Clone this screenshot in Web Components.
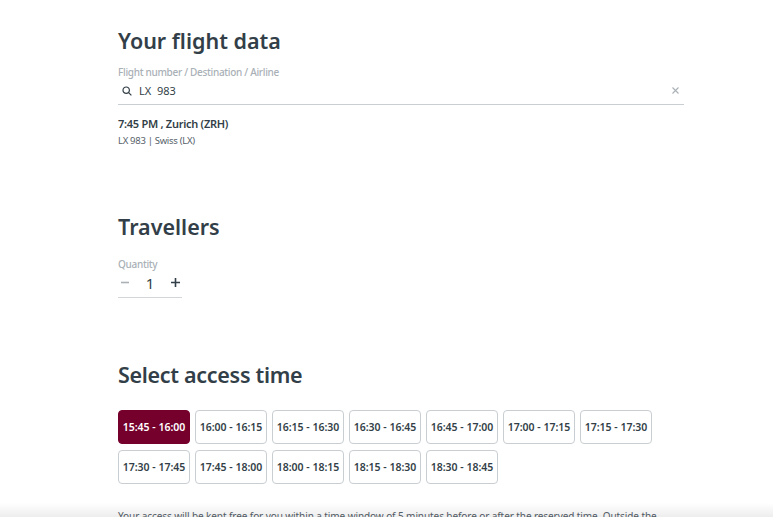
<!DOCTYPE html>
<html lang="en">
<head>
<meta charset="utf-8">
<title>Your flight data</title>
<style>
  html, body { margin: 0; height: 100%; overflow: hidden; background: #fff; }
  body { font-family: "Noto Sans", "Open Sans", sans-serif; color: #333f48; }
</style>
</head>
<body>
<booking-page>
  <form-section heading="Your flight data" style="--section-height: 186px">
    <flight-search label="Flight number / Destination / Airline" value="LX  983"></flight-search>
    <flight-result time="7:45 PM , Zurich (ZRH)" detail="LX 983 | Swiss (LX)"></flight-result>
  </form-section>
  <form-section heading="Travellers" style="--section-height: 148px; --heading-gap: 16px">
    <quantity-stepper label="Quantity" value="1"></quantity-stepper>
  </form-section>
  <form-section heading="Select access time" style="--heading-spacing: -.3px">
    <time-grid>
      <time-slot selected>15:45 - 16:00</time-slot>
      <time-slot>16:00 - 16:15</time-slot>
      <time-slot>16:15 - 16:30</time-slot>
      <time-slot>16:30 - 16:45</time-slot>
      <time-slot>16:45 - 17:00</time-slot>
      <time-slot>17:00 - 17:15</time-slot>
      <time-slot>17:15 - 17:30</time-slot>
      <time-slot>17:30 - 17:45</time-slot>
      <time-slot>17:45 - 18:00</time-slot>
      <time-slot>18:00 - 18:15</time-slot>
      <time-slot>18:15 - 18:30</time-slot>
      <time-slot>18:30 - 18:45</time-slot>
    </time-grid>
    <access-note>Your access will be kept free for you within a time window of 5 minutes before or after the reserved time. Outside the</access-note>
  </form-section>
</booking-page>

<script>
// small helper, every element gets an open shadow root with its own styles
function shadowOf(el, html) {
  const shadow = el.attachShadow({ mode: 'open' });
  shadow.innerHTML = html;
  return shadow;
}

class BookingPage extends HTMLElement {
  constructor() {
    super();
    shadowOf(this, `
      <style>
        :host { display: block; height: 524px; overflow: hidden; position: relative; box-sizing: border-box; padding: 27px 89px 0 118px; }
        /* white footer with a soft shadow above it, the text runs under it */
        .fade { position: absolute; left: 0; right: 0; bottom: 0; height: 21px;
                background: linear-gradient(to bottom, rgba(0,0,0,0) 0, rgba(0,0,0,.07) 14px, #fff 14px); }
      </style>
      <slot></slot>
      <div class="fade"></div>
    `);
  }
}

class FormSection extends HTMLElement {
  constructor() {
    super();
    shadowOf(this, `
      <style>
        :host { display: block; height: var(--section-height, auto); }
        h2 { margin: 0 0 var(--heading-gap, 10px); font-size: 21.5px; line-height: 28px; font-weight: 600; color: #333f48;
             letter-spacing: var(--heading-spacing, 0); }
      </style>
      <h2>${this.getAttribute('heading')}</h2>
      <slot></slot>
    `);
  }
}

class FlightSearch extends HTMLElement {
  constructor() {
    super();
    shadowOf(this, `
      <style>
        :host { display: block; }
        label { display: block; font-size: 10px; line-height: 14px; letter-spacing: -.3px; color: #a9b0b6; font-weight: 500; }
        .field { display: flex; align-items: center; height: 23px; padding: 0 5px 2px 4px; border-bottom: 1px solid #c9ced2; }
        svg { display: block; flex: none; }
        .value { flex: 1; margin-left: 7px; font-size: 11px; color: #333f48; white-space: pre; }
      </style>
      <label>${this.getAttribute('label')}</label>
      <div class="field">
        <svg width="10" height="10" viewBox="0 0 10 10" fill="none" stroke="#333f48" stroke-width="1.2">
          <circle cx="4.2" cy="4.2" r="3.2"/><path d="M6.6 6.6 9.4 9.4"/>
        </svg>
        <span class="value">${this.getAttribute('value')}</span>
        <svg width="7" height="7" viewBox="0 0 7 7" fill="none" stroke="#a9b0b6" stroke-width="1.1">
          <path d="M.5.5l6 6M6.5.5l-6 6"/>
        </svg>
      </div>
    `);
  }
}

class FlightResult extends HTMLElement {
  constructor() {
    super();
    shadowOf(this, `
      <style>
        :host { display: block; margin-top: 12px; }
        b { display: block; font-size: 11px; line-height: 14px; letter-spacing: -.27px; font-weight: 600; color: #333f48; }
        span { display: block; margin-top: 3px; font-size: 9.5px; line-height: 13px; letter-spacing: -.3px; color: #56616a; }
      </style>
      <b>${this.getAttribute('time')}</b>
      <span>${this.getAttribute('detail')}</span>
    `);
  }
}

class QuantityStepper extends HTMLElement {
  constructor() {
    super();
    shadowOf(this, `
      <style>
        :host { display: block; width: 64px; }
        label { display: block; font-size: 10px; line-height: 14px; letter-spacing: -.3px; color: #a9b0b6; font-weight: 500; }
        .row { display: flex; justify-content: space-between; align-items: center; height: 27px; padding: 0 2px 3px 3px; box-sizing: border-box; border-bottom: 1px solid #d3d6d9; }
        span { font-size: 15px; color: #333f48; }
        svg { display: block; }
      </style>
      <label>${this.getAttribute('label')}</label>
      <div class="row">
        <svg width="8" height="9" viewBox="0 0 8 9" stroke="#a9b0b6" stroke-width="1.6"><path d="M0 4.5h8"/></svg>
        <span>${this.getAttribute('value')}</span>
        <svg width="9" height="9" viewBox="0 0 9 9" stroke="#333f48" stroke-width="1.6"><path d="M0 4.5h9M4.5 0v9"/></svg>
      </div>
    `);
  }
}

class TimeGrid extends HTMLElement {
  constructor() {
    super();
    shadowOf(this, `
      <style>
        :host { display: grid; grid-template-columns: repeat(7, 72px); column-gap: 5px; row-gap: 6px; margin-top: 21px; }
      </style>
      <slot></slot>
    `);
  }
}

class TimeSlot extends HTMLElement {
  constructor() {
    super();
    shadowOf(this, `
      <style>
        :host { display: flex; align-items: center; justify-content: center; height: 34px; box-sizing: border-box;
                border: 1px solid #c9ced2; border-radius: 4px; background: #fff; color: #333f48;
                font-size: 10.5px; font-weight: 600; white-space: nowrap; }
        :host([selected]) { background: #75002c; border-color: #75002c; color: #fff; }
      </style>
      <slot></slot>
    `);
  }
}

class AccessNote extends HTMLElement {
  constructor() {
    super();
    shadowOf(this, `
      <style>
        :host { display: block; margin-top: 25px; width: 566px; font-size: 10px; line-height: 14px; letter-spacing: -.085px; color: #56616a; white-space: nowrap; }
      </style>
      <slot></slot>
    `);
  }
}

customElements.define('booking-page', BookingPage);
customElements.define('form-section', FormSection);
customElements.define('flight-search', FlightSearch);
customElements.define('flight-result', FlightResult);
customElements.define('quantity-stepper', QuantityStepper);
customElements.define('time-grid', TimeGrid);
customElements.define('time-slot', TimeSlot);
customElements.define('access-note', AccessNote);
</script>
</body>
</html>
